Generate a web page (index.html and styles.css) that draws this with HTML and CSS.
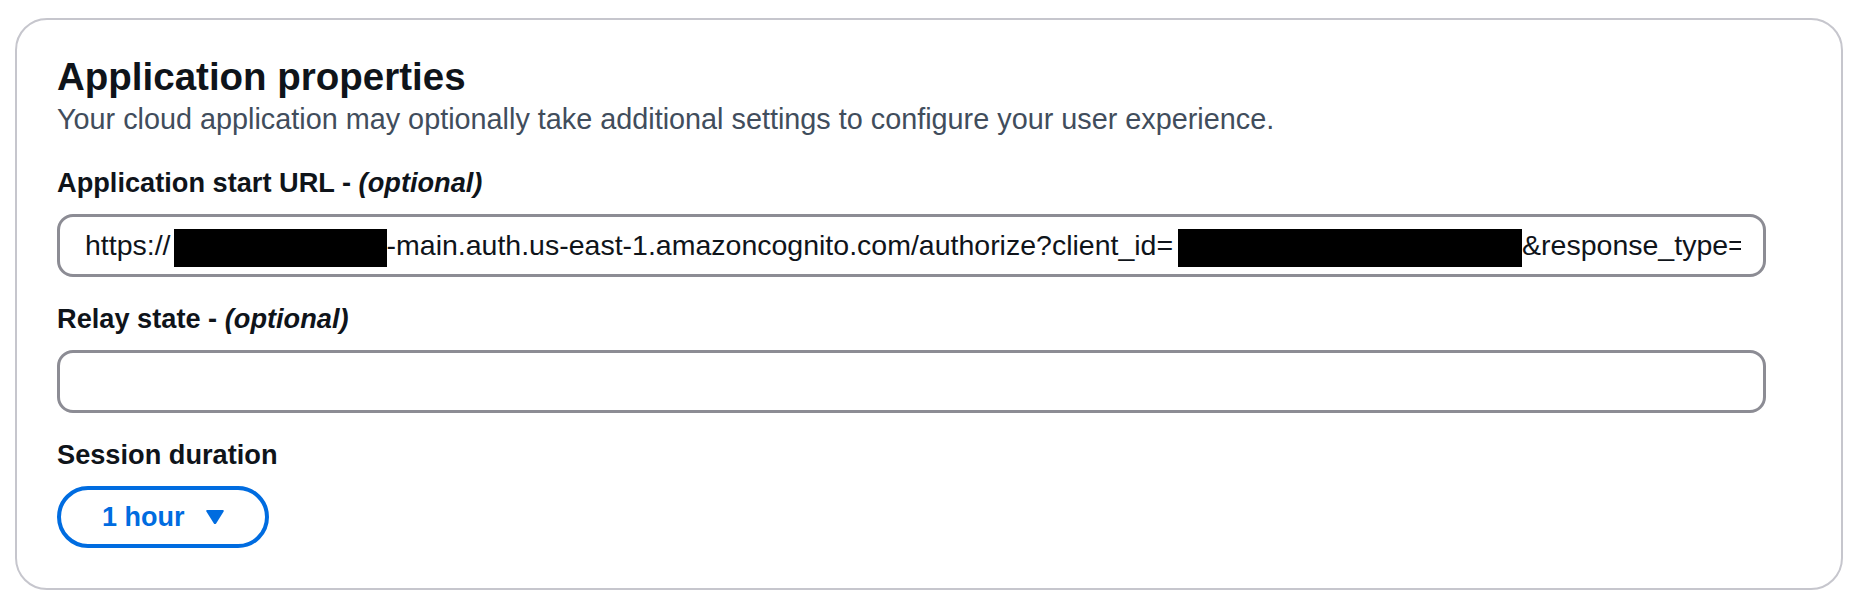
FILE: index.html
```html
<!DOCTYPE html>
<html lang="en">
<head>
    <meta charset="UTF-8">
    <title>Application properties</title>
    <link rel="stylesheet" href="styles.css">
</head>
<body>

    <!-- Application properties container -->
    <div class="container">
        <div class="header">
            <h2>Application properties</h2>
            <p class="description">Your cloud application may optionally take additional settings to configure your user experience.</p>
        </div>

        <div class="fields">
            <!-- Start URL -->
            <div class="field">
                <label>Application start URL - <i>(optional)</i></label>
                <div class="input">
                    <div class="input-text">https://<span class="redact first"></span>-main.auth.us-east-1.amazoncognito.com/authorize?client_id=<span class="redact second"></span>&amp;response_type=</div>
                </div>
            </div>

            <!-- Relay state -->
            <div class="field">
                <label>Relay state - <i>(optional)</i></label>
                <div class="input">
                    <div class="input-text"></div>
                </div>
            </div>

            <!-- Session duration -->
            <div class="field">
                <label>Session duration</label>
                <button class="select-btn">
                    1 hour
                    <svg width="20" height="16" viewBox="0 0 20 16">
                        <path d="M2.2 1 H17.8 Q19.6 1 18.6 2.6 L11.3 14.2 Q10 16 8.7 14.2 L1.4 2.6 Q0.4 1 2.2 1 Z" fill="#006ce0"/>
                    </svg>
                </button>
            </div>
        </div>
    </div>

</body>
</html>
```

FILE: styles.css
```css
/* Global Styles */
* {
    margin: 0;
    padding: 0;
    box-sizing: border-box;
}

body {
    background: #ffffff;
    margin: 18px 15px;
    font-family: "Liberation Sans", Arial, sans-serif;
    color: #0f141a;
}

/* Container */
.container {
    border: 2px solid #c6c6cd;
    border-radius: 32px;
    padding: 35px 40px 40px 40px;
    background: #ffffff;
}

/* Header */
.header h2 {
    font-size: 38.5px;
    line-height: 44px;
    font-weight: bold;
    color: #0f141a;
}

.description {
    font-size: 28.8px;
    line-height: 40px;
    color: #414d5c;
}

/* Form fields */
.fields {
    display: flex;
    flex-direction: column;
    gap: 22px;
    margin-top: 24px;
}

.field {
    display: flex;
    flex-direction: column;
    align-items: flex-start;
    gap: 11px;
}

.field label {
    font-size: 27.2px;
    line-height: 40px;
    font-weight: bold;
    color: #0f141a;
}

.field label i {
    font-style: italic;
}

/* Text input */
.input {
    width: calc(100% - 35px);
    height: 63px;
    border: 3px solid #8c8c94;
    border-radius: 16px;
    padding: 0 22px 0 25px;
    display: flex;
    align-items: center;
    background: #ffffff;
}

.input-text {
    width: 100%;
    overflow: hidden;
    white-space: nowrap;
    font-size: 28.5px;
    line-height: 40px;
    color: #0f141a;
}

.redact {
    display: inline-block;
    height: 38px;
    background: #000000;
    vertical-align: -12px;
}

.redact.first {
    width: 213px;
    margin-left: 3px;
}

.redact.second {
    width: 344px;
    margin-left: 5px;
}

/* Select button */
.select-btn {
    display: inline-flex;
    align-items: center;
    gap: 20px;
    height: 62px;
    padding: 0 40px 0 41px;
    border: 4px solid #006ce0;
    border-radius: 31px;
    background: #ffffff;
    color: #006ce0;
    font-family: "Liberation Sans", Arial, sans-serif;
    font-size: 27px;
    font-weight: bold;
    cursor: pointer;
}

.select-btn svg {
    display: block;
}
```
